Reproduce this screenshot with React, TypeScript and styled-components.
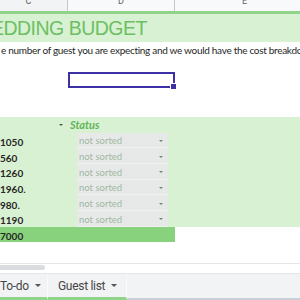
import React from "react";
import styled, { createGlobalStyle } from "styled-components";

const Global = createGlobalStyle`
  html, body { margin: 0; padding: 0; background: #fff; }
  body { width: 300px; height: 300px; overflow: hidden; font-family: "Lato", "Liberation Sans", sans-serif; }
  #root { width: 300px; height: 300px; overflow: hidden; }
`;

const COLS = "68px 107px 1fr";
const ROW_H = 15.67;
const LIGHT = "#d9f1d3";
const DARK = "#88d17d";

const Sheet = styled.div`
  display: flex;
  flex-direction: column;
  width: 300px;
  height: 300px;
  overflow: hidden;
`;

const ColHeaderRow = styled.div`
  display: grid;
  grid-template-columns: 78px 107px 140px;
  width: 325px;
  margin-left: -10px;
  height: 11px;
  overflow: hidden;
  flex-shrink: 0;
`;

const ColHeader = styled.div<{ $bg: string }>`
  background: ${(p) => p.$bg};
  border-right: 1px solid #c7c7c7;
  color: #5f6368;
  font-family: "Roboto", "Liberation Sans", sans-serif;
  font-size: 9px;
  line-height: 9px;
  text-align: center;
  margin-top: -3px;
`;

const GreenStripe = styled.div`
  height: 3px;
  background: #8fd488;
`;

const TitleRow = styled.div`
  height: 28px;
  background: ${LIGHT};
  display: flex;
  align-items: center;
  overflow: hidden;
`;

const Title = styled.div`
  font-family: "Liberation Sans", sans-serif;
  font-size: 19.5px;
  letter-spacing: -0.5px;
  color: #6cbf62;
  white-space: nowrap;
  margin-left: -27px;
  margin-top: 1px;
  flex-shrink: 0;
`;

const InfoRow = styled.div`
  height: 16px;
  display: flex;
  align-items: center;
  white-space: nowrap;
  overflow: hidden;
  font-size: 10px;
  letter-spacing: -0.3px;
  color: #1f1f1f;
  padding-left: 1px;
`;

const BlankRow = styled.div<{ $h: number }>`
  height: ${(p) => p.$h}px;
  display: grid;
  grid-template-columns: ${COLS};
`;

const SelectedCell = styled.div`
  grid-column: 2;
  position: relative;
  border: 2px solid #3d2fa6;
  box-sizing: border-box;
  margin-top: -1px;
  margin-bottom: 1px;
  &::after {
    content: "";
    position: absolute;
    right: -4px;
    bottom: -4px;
    width: 5px;
    height: 5px;
    background: #3d2fa6;
    border: 1px solid #fff;
  }
`;

const Table = styled.div`
  display: flex;
  flex-direction: column;
`;

const TRow = styled.div<{ $total?: boolean }>`
  height: ${ROW_H}px;
  display: grid;
  grid-template-columns: ${COLS};
  background: ${(p) => (p.$total ? "transparent" : LIGHT)};
`;

const NumCell = styled.div<{ $total?: boolean }>`
  display: flex;
  align-items: center;
  padding-top: 3px;
  font-size: 10px;
  font-weight: 700;
  color: #262626;
  background: ${(p) => (p.$total ? DARK : "transparent")};
`;

const HeadLabel = styled.div`
  grid-column: 1 / span 2;
  display: flex;
  align-items: center;
  padding-left: 59px;
  gap: 7px;
`;

const Caret = styled.span<{ $c: string; $s: number }>`
  display: inline-block;
  width: 0;
  height: 0;
  border-left: ${(p) => p.$s}px solid transparent;
  border-right: ${(p) => p.$s}px solid transparent;
  border-top: ${(p) => p.$s}px solid ${(p) => p.$c};
`;

const StatusHead = styled.span`
  font-style: italic;
  font-weight: 700;
  font-size: 11px;
  color: #5fb55a;
`;

const StatusWrap = styled.div<{ $total?: boolean }>`
  display: flex;
  align-items: stretch;
  padding: 0 7px 0 9px;
  background: ${(p) => (p.$total ? DARK : "transparent")};
`;

const StatusCell = styled.div`
  flex: 1;
  display: flex;
  align-items: center;
  justify-content: space-between;
  background: #e6e9e8;
  border-bottom: 1px solid #eef2ee;
  padding: 2px 5px 0 2px;
  font-size: 9.5px;
  color: #a2b7a2;
`;

const Spacer = styled.div<{ $h: number }>`
  height: ${(p) => p.$h}px;
`;

const ScrollArea = styled.div`
  height: 8px;
  border-top: 1px solid #e6e6e6;
  display: flex;
  align-items: flex-start;
  padding-top: 1px;
`;

const Thumb = styled.div`
  width: 45px;
  height: 5px;
  background: #dadce0;
  border-radius: 0 3px 3px 0;
`;

const TabBar = styled.div`
  flex: 1;
  background: #f1f3f4;
  border-top: 1px solid #e3e5e8;
  border-bottom: 2px solid #c9d0d8;
  display: flex;
  align-items: stretch;
`;

const Tab = styled.div<{ $w: number; $pl: number }>`
  width: ${(p) => p.$w}px;
  padding-left: ${(p) => p.$pl}px;
  box-sizing: border-box;
  display: flex;
  align-items: center;
  gap: 6px;
  font-family: "Roboto", "Liberation Sans", sans-serif;
  font-size: 12px;
  letter-spacing: -0.3px;
  color: #444746;
  border-bottom: 3px solid #8fd488;
  margin-bottom: -2px;
  border-right: 1px solid #fafafa;
`;

const rows = [
  { n: "1050" },
  { n: "560" },
  { n: "1260" },
  { n: "1960." },
  { n: "980." },
  { n: "1190" },
];

export default function App() {
  return (
    <Sheet>
      <Global />
      <ColHeaderRow>
        <ColHeader $bg="#f1f3f4">C</ColHeader>
        <ColHeader $bg="#f8f9fa">D</ColHeader>
        <ColHeader $bg="#f8f9fa">E</ColHeader>
      </ColHeaderRow>
      <GreenStripe />
      <TitleRow>
        <Title>WEDDING BUDGET</Title>
      </TitleRow>
      <InfoRow>e number of guest you are expecting and we would have the cost breakdown</InfoRow>
      <BlankRow $h={15} />
      <BlankRow $h={16}>
        <SelectedCell />
      </BlankRow>
      <Spacer $h={28} />
      <Table>
        <TRow>
          <HeadLabel>
            <Caret $c="#555" $s={2.5} />
            <StatusHead>Status</StatusHead>
          </HeadLabel>
        </TRow>
        {rows.map((r) => (
          <TRow key={r.n}>
            <NumCell>{r.n}</NumCell>
            <StatusWrap>
              <StatusCell>
                not sorted
                <Caret $c="#6a8a6a" $s={2.5} />
              </StatusCell>
            </StatusWrap>
          </TRow>
        ))}
        <TRow $total>
          <NumCell $total>7000</NumCell>
          <StatusWrap $total />
        </TRow>
      </Table>
      <Spacer $h={21} />
      <ScrollArea>
        <Thumb />
      </ScrollArea>
      <TabBar>
        <Tab $w={48} $pl={0}>
          To-do
          <Caret $c="#555" $s={3} />
        </Tab>
        <Tab $w={79} $pl={10}>
          Guest list
          <Caret $c="#555" $s={3} />
        </Tab>
      </TabBar>
    </Sheet>
  );
}
